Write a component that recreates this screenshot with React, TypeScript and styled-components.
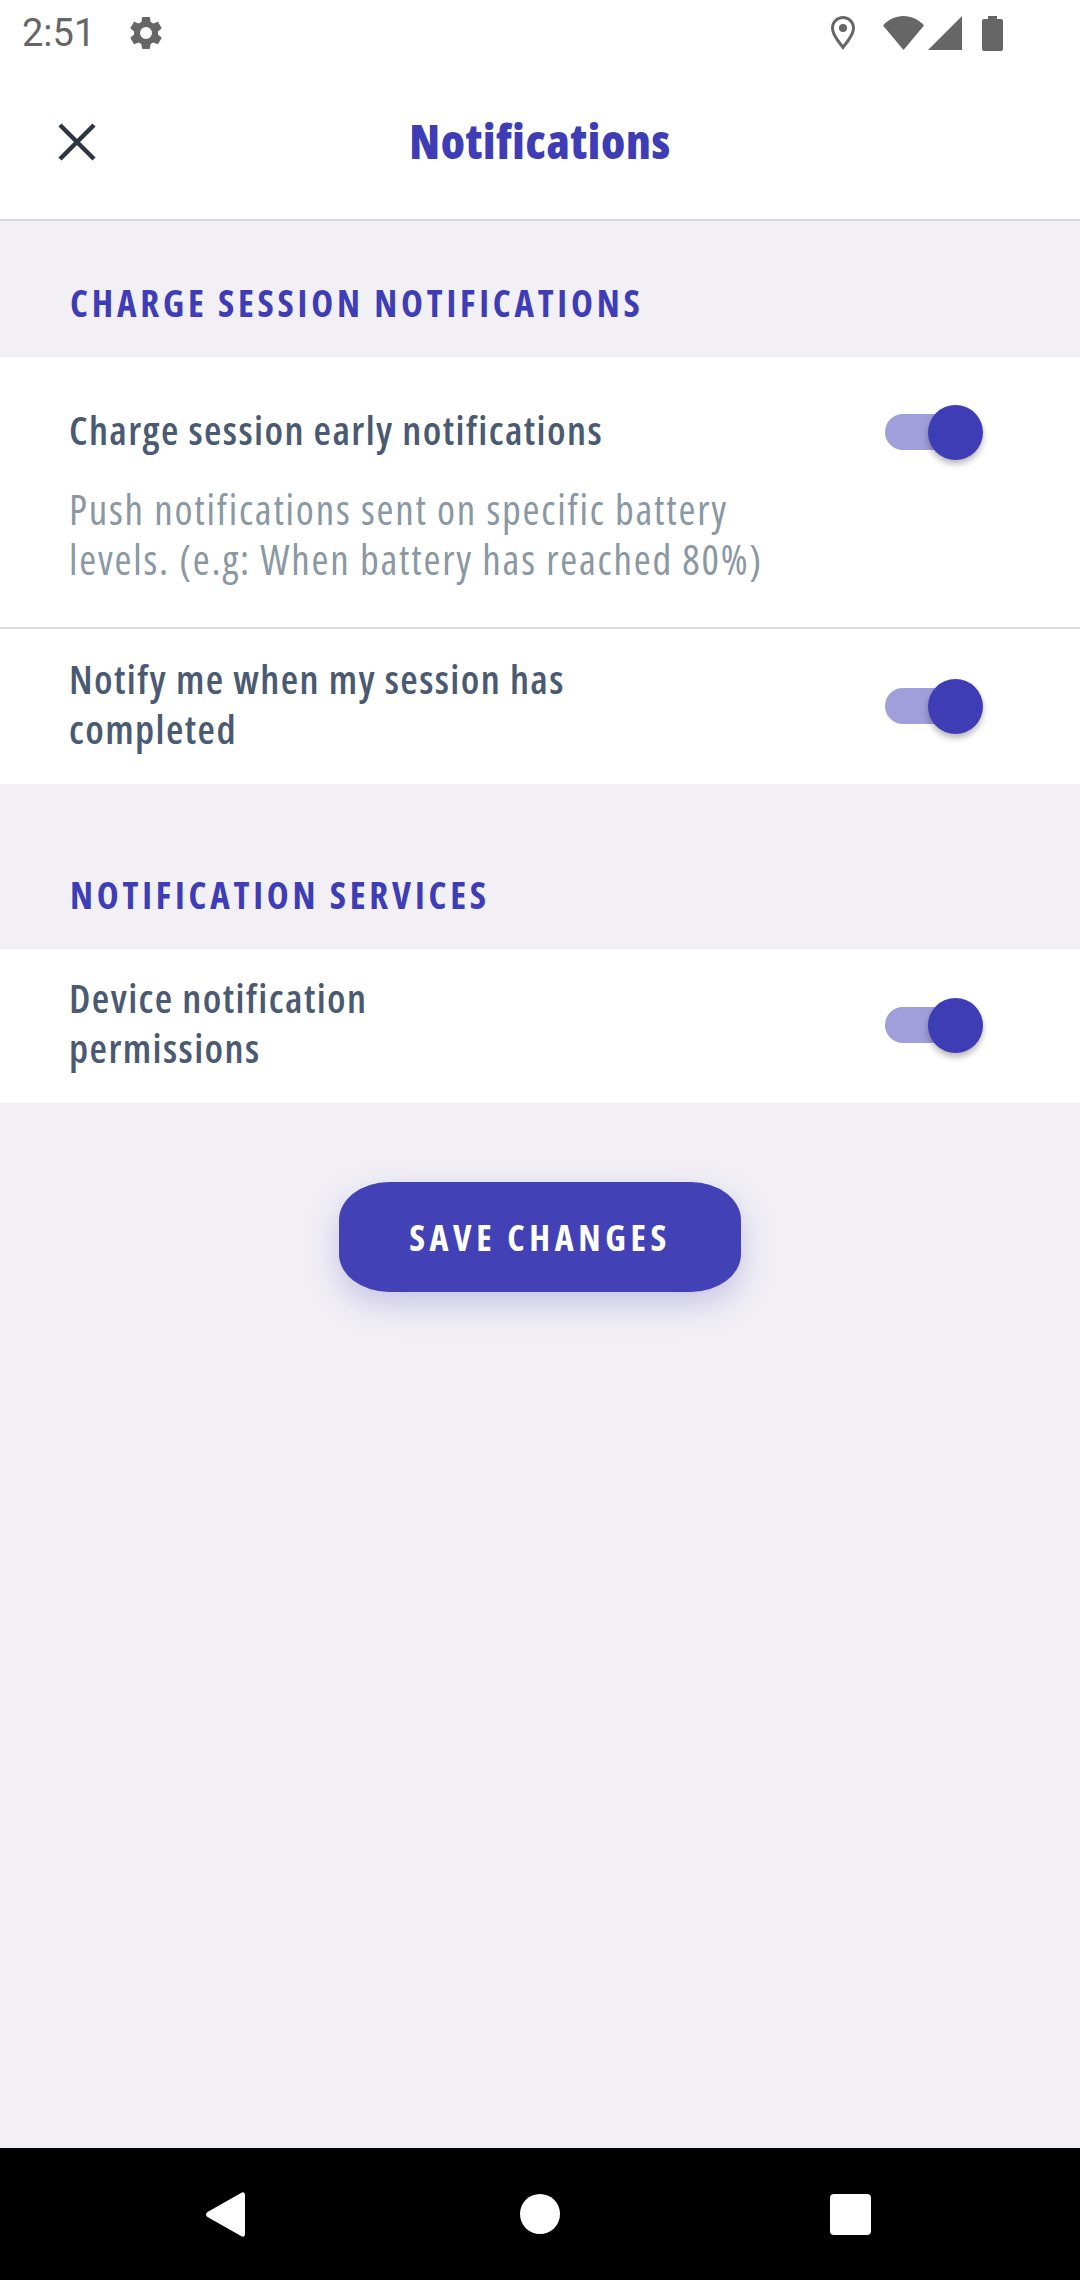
import React from 'react';
import styled, { createGlobalStyle } from 'styled-components';

const INDIGO = '#3f3db5';
const SAIRA = '"Open Sans", "Liberation Sans", sans-serif';

const Global = createGlobalStyle`
  html, body { margin: 0; padding: 0; background: #f2f0f5; }
  * { box-sizing: border-box; }
`;

const Page = styled.div`
  width: 1080px;
  height: 2280px;
  display: flex;
  flex-direction: column;
  background: #f2f0f5;
  font-family: ${SAIRA};
  font-stretch: 75%;
`;

const StatusBar = styled.div`
  height: 66px;
  flex: none;
  display: flex;
  align-items: center;
  background: #fff;
  padding: 0 0 0 22px;
  color: #666;
`;

const Time = styled.span`
  font-family: Roboto, sans-serif;
  font-stretch: 100%;
  font-size: 38px;
  line-height: 66px;
  width: 104px;
`;

const StatusIcons = styled.div`
  margin-left: auto;
  margin-right: 77px;
  display: flex;
  align-items: center;
  gap: 4px;
`;

const Glyph = styled.svg<{ $ml?: number }>`
  display: block;
  flex: none;
  margin-left: ${p => p.$ml || 0}px;
  fill: currentColor;
`;

const Header = styled.header`
  height: 155px;
  flex: none;
  display: flex;
  align-items: center;
  justify-content: center;
  background: #fff;
  border-bottom: 2px solid #d6d6da;
  position: relative;
`;

const CloseButton = styled.button`
  position: absolute;
  left: 58px;
  top: 57px;
  width: 38px;
  height: 38px;
  padding: 0;
  border: 0;
  background: none;
  color: #2d3640;
`;

const Title = styled.h1`
  margin: -3px 0 0;
  color: ${INDIGO};
  font-size: 47px;
  font-weight: 800;
  letter-spacing: 0.7px;
  line-height: 60px;
`;

const SectionTitle = styled.h2<{ $h: number }>`
  margin: 0;
  height: ${p => p.$h}px;
  flex: none;
  padding: 0 0 29px 70px;
  display: flex;
  align-items: flex-end;
  color: ${INDIGO};
  font-size: 37px;
  font-weight: 700;
  line-height: 50px;
  letter-spacing: 3.8px;
`;

const Card = styled.section`
  background: #fff;
  flex: none;
`;

const Row = styled.div<{ $divider?: boolean; $top: number; $bottom: number; $start?: boolean }>`
  display: flex;
  justify-content: space-between;
  align-items: ${p => (p.$start ? 'flex-start' : 'center')};
  padding: ${p => p.$top}px 97px ${p => p.$bottom}px 69px;
  border-bottom: ${p => (p.$divider ? '2px solid #dcdce0' : '0')};
`;

const RowText = styled.div`
  display: flex;
  flex-direction: column;
  gap: 29px;
`;

const RowTitle = styled.div`
  color: #4a5a72;
  font-size: 40px;
  font-weight: 600;
  letter-spacing: 1.4px;
  line-height: 50px;
`;

const RowHint = styled.div`
  color: #8a98a4;
  font-size: 41px;
  font-weight: 400;
  letter-spacing: 1.78px;
  line-height: 50px;
`;

const Toggle = styled.div<{ $offset?: number }>`
  position: relative;
  width: 98px;
  height: 55px;
  flex: none;
  margin-top: ${p => p.$offset || 0}px;
  &::before {
    content: '';
    position: absolute;
    left: 0;
    top: 9px;
    width: 85px;
    height: 36px;
    border-radius: 18px;
    background: #a09edb;
  }
  &::after {
    content: '';
    position: absolute;
    right: 0;
    top: 0;
    width: 55px;
    height: 55px;
    border-radius: 50%;
    background: ${INDIGO};
    box-shadow: 0 4px 6px rgba(0, 0, 0, 0.28);
  }
`;

const Actions = styled.div`
  flex: 1;
  display: flex;
  justify-content: center;
  align-items: flex-start;
  padding-top: 79px;
`;

const SaveButton = styled.button`
  width: 402px;
  height: 110px;
  border: 0;
  border-radius: 50px / 38px;
  background: #4341b6;
  color: #fff;
  font-family: ${SAIRA};
  font-stretch: 75%;
  font-size: 36px;
  font-weight: 700;
  letter-spacing: 4.6px;
  box-shadow: 0 12px 32px rgba(67, 65, 182, 0.25);
`;

const NavBar = styled.nav`
  height: 132px;
  flex: none;
  display: flex;
  align-items: center;
  padding-left: 206px;
  background: #000;
  color: #fff;
`;

export default function App() {
  return (
    <Page>
      <Global />
      <StatusBar>
        <Time>2:51</Time>
        <Glyph width="40" height="40" viewBox="0 0 24 24">
          <path d="M19.14 12.94c.04-.3.06-.61.06-.94s-.02-.64-.07-.94l2.03-1.58a.49.49 0 0 0 .12-.61l-1.92-3.32a.49.49 0 0 0-.59-.22l-2.39.96a7 7 0 0 0-1.62-.94l-.36-2.54a.48.48 0 0 0-.48-.41h-3.84a.47.47 0 0 0-.47.41l-.36 2.54a7.3 7.3 0 0 0-1.62.94l-2.39-.96a.48.48 0 0 0-.59.22L2.73 8.87a.47.47 0 0 0 .12.61l2.03 1.58c-.05.3-.08.63-.08.94s.02.64.07.94l-2.03 1.58a.49.49 0 0 0-.12.61l1.92 3.32c.12.22.37.29.59.22l2.39-.96c.5.38 1.03.7 1.62.94l.36 2.54c.05.24.24.41.48.41h3.84c.24 0 .44-.17.47-.41l.36-2.54a7 7 0 0 0 1.62-.94l2.39.96c.22.08.47 0 .59-.22l1.92-3.32a.47.47 0 0 0-.12-.61l-2.01-1.58zM12 15.6a3.6 3.6 0 1 1 0-7.2 3.6 3.6 0 0 1 0 7.2z" />
        </Glyph>
        <StatusIcons>
          <Glyph width="24" height="34" viewBox="0 0 24 34">
            <path fillRule="evenodd" d="M12 0C5.4 0 0 5.3 0 12c0 8 9 17.500 12 22 3-4.500 12-14 12-22C24 5.300 18.600 0 12 0zm0 3c5 0 9 4 9 9 0 5.800-6 12.800-9 16.800C9 24.800 3 17.800 3 12c0-5 4-9 9-9z" />
            <circle cx="12" cy="12" r="4" />
          </Glyph>
          <Glyph $ml={24} width="41" height="34" viewBox="0 0 41 34">
            <path d="M20.500 34 0 9.500C5.500 3.500 12.500 0 20.500 0S35.500 3.500 41 9.500z" />
          </Glyph>
          <Glyph width="34" height="34" viewBox="0 0 34 34">
            <path d="M34 0v34H0z" />
          </Glyph>
          <Glyph $ml={16} width="21" height="35" viewBox="0 0 21 35">
            <path d="M6 0h9v3h4a2 2 0 0 1 2 2v28a2 2 0 0 1-2 2H2a2 2 0 0 1-2-2V5a2 2 0 0 1 2-2h4z" />
          </Glyph>
        </StatusIcons>
      </StatusBar>

      <Header>
        <CloseButton aria-label="Close">
          <svg width="38" height="38" viewBox="0 0 38 38" style={{ display: 'block' }}>
            <path d="M2 2l34 34M36 2 2 36" stroke="currentColor" strokeWidth="4.5" fill="none" />
          </svg>
        </CloseButton>
        <Title>Notifications</Title>
      </Header>

      <SectionTitle $h={136}>CHARGE SESSION NOTIFICATIONS</SectionTitle>
      <Card>
        <Row $divider $start $top={48} $bottom={43}>
          <RowText>
            <RowTitle>Charge session early notifications</RowTitle>
            <RowHint>
              Push notifications sent on specific battery
              <br />
              levels. (e.g: When battery has reached 80%)
            </RowHint>
          </RowText>
          <Toggle />
        </Row>
        <Row $top={25} $bottom={30}>
          <RowTitle>
            Notify me when my session has
            <br />
            completed
          </RowTitle>
          <Toggle $offset={5} />
        </Row>
      </Card>

      <SectionTitle $h={165}>NOTIFICATION SERVICES</SectionTitle>
      <Card>
        <Row $top={24} $bottom={30}>
          <RowTitle>
            Device notification
            <br />
            permissions
          </RowTitle>
          <Toggle $offset={5} />
        </Row>
      </Card>

      <Actions>
        <SaveButton>SAVE CHANGES</SaveButton>
      </Actions>

      <NavBar>
        <Glyph width="39" height="45" viewBox="0 0 39 45">
          <path d="M39 3v39c0 2.500-2 3.500-4 2L1.500 25c-2-1.500-2-3.500 0-5L35 1c2-1.500 4-.5 4 2z" />
        </Glyph>
        <Glyph $ml={275} width="40" height="40" viewBox="0 0 40 40">
          <circle cx="20" cy="20" r="20" />
        </Glyph>
        <Glyph $ml={270} width="41" height="41" viewBox="0 0 41 41">
          <rect width="41" height="41" rx="4" />
        </Glyph>
      </NavBar>
    </Page>
  );
}
